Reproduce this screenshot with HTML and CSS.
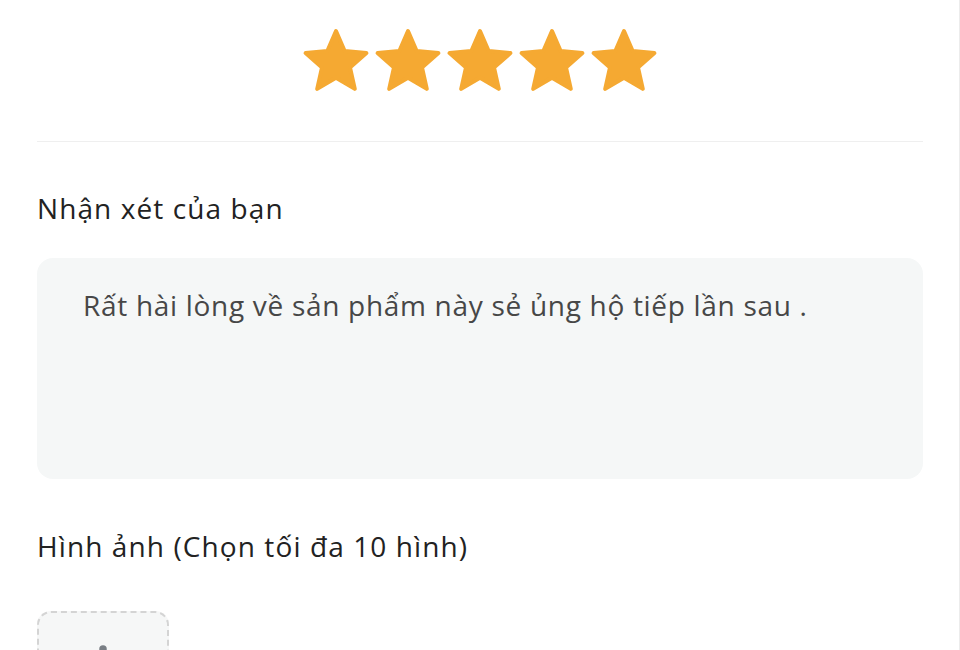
FILE: index.html
```html
<!DOCTYPE html>
<html lang="vi">
<head>
<meta charset="utf-8">
<title>Đánh giá</title>
<link rel="stylesheet" href="styles.css">
</head>
<body>
<div class="page">
  <div class="stars">
    <svg class="star" viewBox="0 0 68 66"><polygon points="34,3 42.65,23.09 64.43,25.11 48,39.55 52.81,60.89 34,49.72 15.19,60.89 20,39.55 3.57,25.11 25.35,23.09"/></svg>
    <svg class="star" viewBox="0 0 68 66"><polygon points="34,3 42.65,23.09 64.43,25.11 48,39.55 52.81,60.89 34,49.72 15.19,60.89 20,39.55 3.57,25.11 25.35,23.09"/></svg>
    <svg class="star" viewBox="0 0 68 66"><polygon points="34,3 42.65,23.09 64.43,25.11 48,39.55 52.81,60.89 34,49.72 15.19,60.89 20,39.55 3.57,25.11 25.35,23.09"/></svg>
    <svg class="star" viewBox="0 0 68 66"><polygon points="34,3 42.65,23.09 64.43,25.11 48,39.55 52.81,60.89 34,49.72 15.19,60.89 20,39.55 3.57,25.11 25.35,23.09"/></svg>
    <svg class="star" viewBox="0 0 68 66"><polygon points="34,3 42.65,23.09 64.43,25.11 48,39.55 52.81,60.89 34,49.72 15.19,60.89 20,39.55 3.57,25.11 25.35,23.09"/></svg>
  </div>
  <div class="divider"></div>
  <h2 class="label label-review">Nhận xét của bạn</h2>
  <div class="comment">Rất hài lòng về sản phẩm này sẻ ủng hộ tiếp lần sau .</div>
  <h2 class="label label-images">Hình ảnh (Chọn tối đa 10 hình)</h2>
  <div class="upload">
    <svg class="upload-icon" viewBox="0 0 24 24"><circle cx="12" cy="4" r="3"/><rect x="4" y="8" width="16" height="12" rx="2"/></svg>
  </div>
</div>
</body>
</html>
```
FILE: styles.css
```css
html, body {
  margin: 0;
  padding: 0;
  background: #fff;
}
body {
  font-family: "Open Sans", "Noto Sans", sans-serif;
  color: #222;
  overflow: hidden;
  height: 650px;
}
.page {
  width: 960px;
  height: 650px;
  overflow: hidden;
  border-right: 1px solid #ececec;
  padding: 0 36px 0 37px;
  box-sizing: border-box;
}
.stars {
  display: flex;
  justify-content: center;
  gap: 4px;
  padding-top: 28px;
}
.star {
  width: 68px;
  height: 66px;
  display: block;
}
.star polygon {
  fill: #f5a932;
  stroke: #f5a932;
  stroke-width: 4;
  stroke-linejoin: round;
}
.divider {
  height: 1px;
  background: #efefef;
  margin-top: 47px;
}
.label {
  margin: 0;
  font-size: 28px;
  font-weight: 500;
  line-height: 36px;
  color: #222;
  letter-spacing: 1.1px;
}
.label-review {
  margin-top: 48px;
}
.comment {
  margin-top: 32px;
  height: 221px;
  box-sizing: border-box;
  background: #f5f7f7;
  border-radius: 16px;
  padding: 29px 46px;
  font-size: 28px;
  line-height: 36px;
  color: #474747;
  font-weight: 400;
  letter-spacing: 0.7px;
}
.label-images {
  margin-top: 49px;
}
.upload {
  margin-top: 47px;
  width: 132px;
  height: 132px;
  box-sizing: border-box;
  border: 2px dashed #d4d4d4;
  border-radius: 14px;
  background: #f6f7f7;
  display: flex;
  justify-content: center;
}
.upload-icon {
  width: 30px;
  height: 30px;
  margin-top: 31px;
  fill: #7a7f85;
}
```
